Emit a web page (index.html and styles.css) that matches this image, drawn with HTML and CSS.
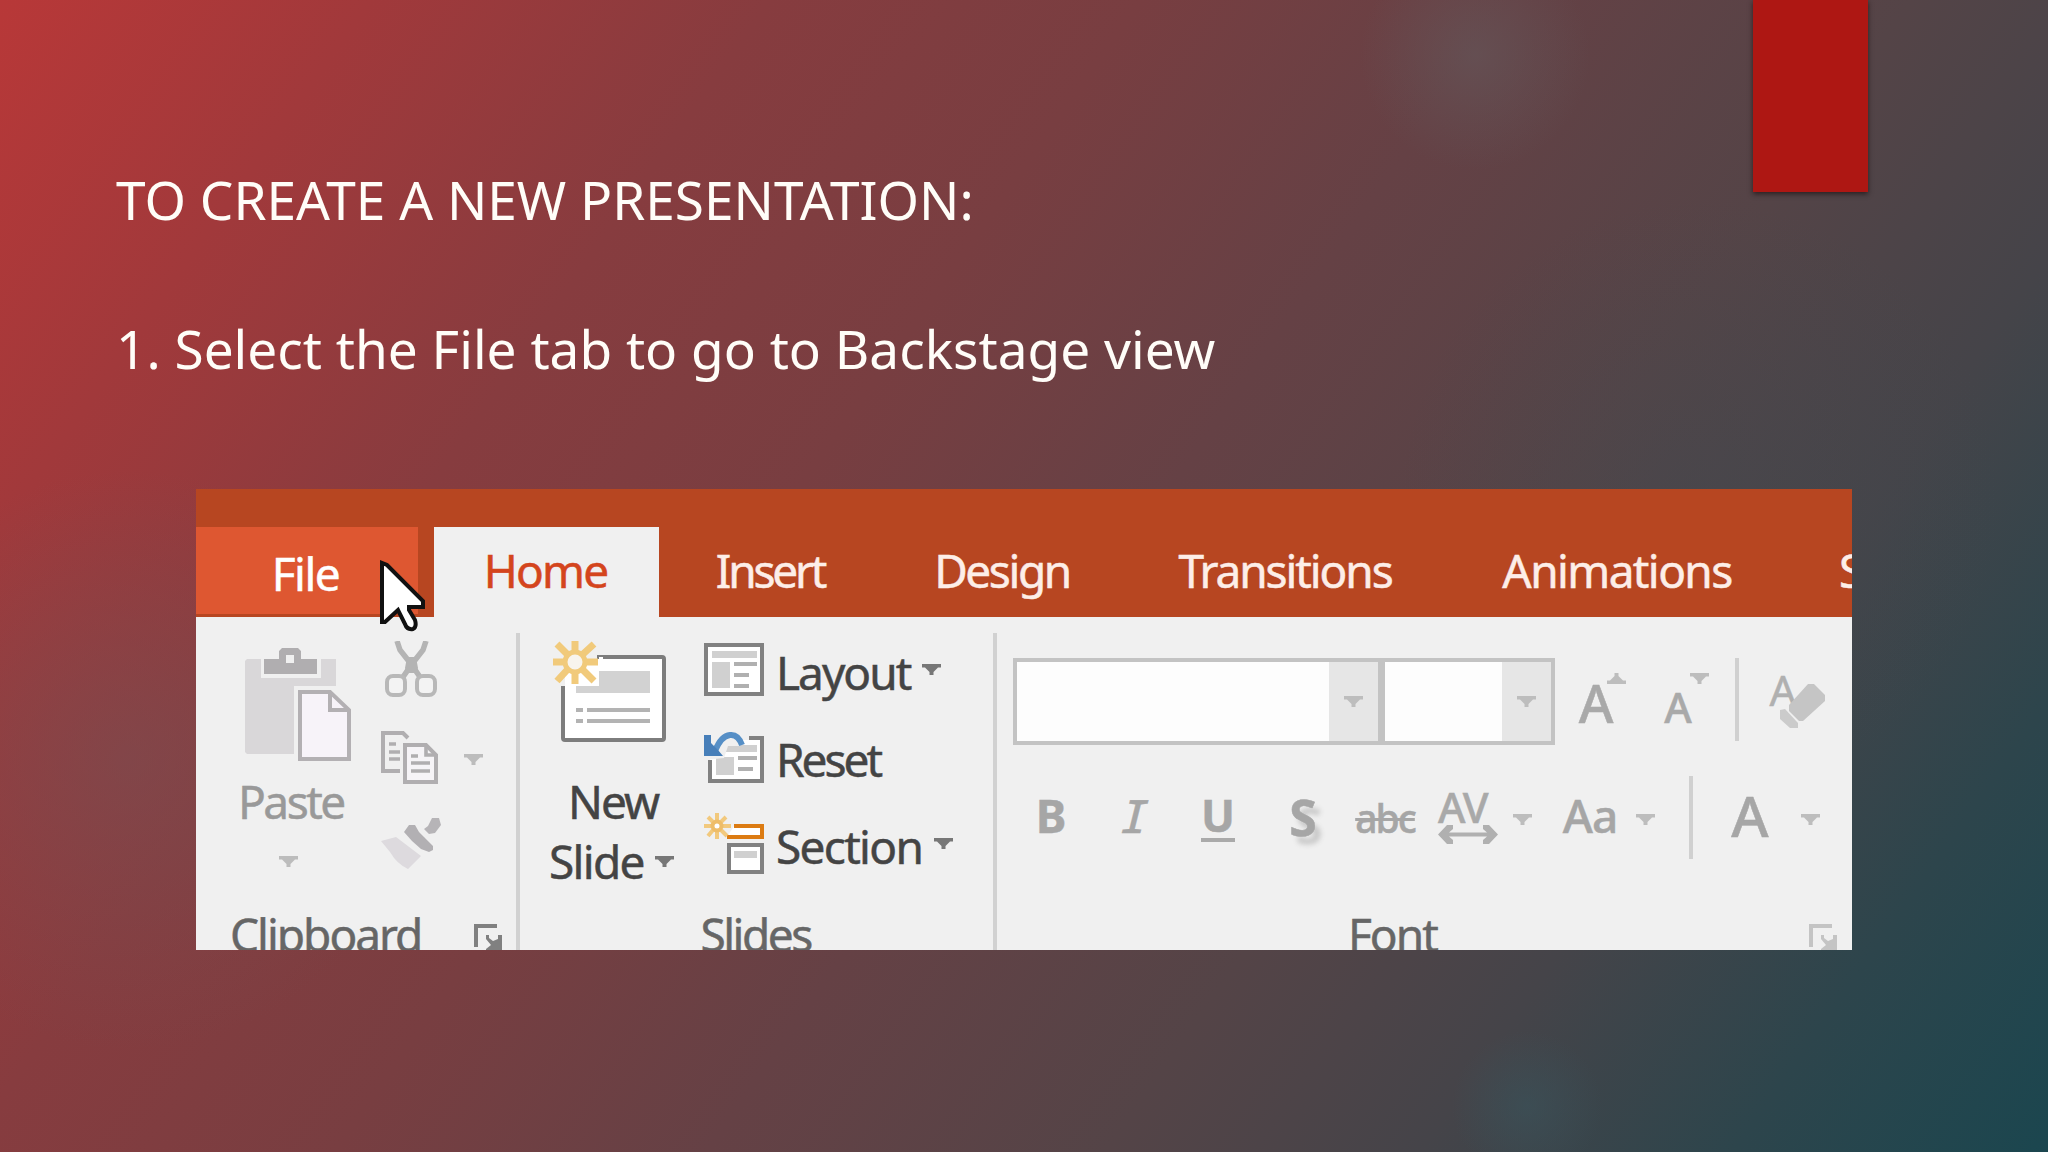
FILE: index.html
```html
<!DOCTYPE html>
<html lang="en">
<head>
<meta charset="utf-8">
<title>To create a new presentation</title>
<link rel="stylesheet" href="styles.css">
</head>
<body>
<svg class="defs" width="0" height="0" aria-hidden="true">
  <symbol id="drop" viewBox="0 0 19 11"><path d="M0 0H19V3.500H16L11.500 8V11H7.500V8L3 3.500H0Z" fill="currentColor"/></symbol>
  <symbol id="launcher" viewBox="0 0 28 28"><path d="M0 0H23V4H4V23H0ZM12 11H15V14L19 17L24 15V11H28V28H12V25L17 21L12 15Z" fill="currentColor"/></symbol>
</svg>
<main class="slide">
  <div class="ribbon-mark"></div>
  <h1 class="title"><span>TO CREATE A NEW PRESENTATION:</span><br><br><span class="step">1. Select the File tab to go to Backstage view</span></h1>

  <section class="office">
    <nav class="tabs">
      <div class="tab file">File</div>
      <div class="tab home">Home</div>
      <div class="tab insert">Insert</div>
      <div class="tab design">Design</div>
      <div class="tab transitions">Transitions</div>
      <div class="tab animations">Animations</div>
      <div class="tab next">S</div>
    </nav>
    <svg class="cursor" viewBox="0 0 46 72"><path d="M2 3V62H5L18 50L25 64Q27 70 33 69Q37 67 35 60L29 50V47H43V41L7 5Z" fill="#fff" stroke="#111" stroke-width="4"/></svg>

    <div class="groups">
      <section class="group clipboard">
        <div class="tools">
          <div class="paste">
            <svg class="paste-icon" viewBox="0 0 106 114">
              <path d="M2 11H16V30H76V11H91V38H49V106H2L0 104V13Z" fill="#d9d7d9"/>
              <path d="M19 11H34V3L37 0H53L56 3V11H72V26H19Z" fill="#b0aeb0"/><path d="M41 7H49V15H41Z" fill="#f0f0f0"/>
              <path d="M55 44H85L104 62V111H55Z" fill="#f7f3f9" stroke="#b3b0b3" stroke-width="4"/>
              <path d="M85 44V62H104" fill="none" stroke="#b3b0b3" stroke-width="4"/>
            </svg>
            <span class="label paste-label">Paste</span>
            <svg class="drop paste-drop"><use href="#drop"/></svg>
          </div>
          <div class="edit">
            <svg class="cut-icon" viewBox="0 0 52 56"><path d="M12 0L15 9L26 23L35 36M41 0L38 9L27 23L18 36" fill="none" stroke="#b4b4b4" stroke-width="5.500"/><path d="M22 16H31L33 27L31 32H22L20 27Z" fill="#b4b4b4"/><rect x="2" y="35" width="18" height="19" rx="6" fill="#f3f3f3" stroke="#b8b8b8" stroke-width="4"/><rect x="32" y="35" width="18" height="19" rx="6" fill="#f3f3f3" stroke="#b8b8b8" stroke-width="4"/></svg>
            <div class="copy">
              <svg class="copy-icon" viewBox="0 0 57 53"><path d="M19 40H2V2H22L27 7" fill="none" stroke="#b0aeb0" stroke-width="4"/><path d="M8 13H15M8 21H19M8 28H19" stroke="#b0aeb0" stroke-width="3.6"/><path d="M24 14H45L55 24V51H24Z" fill="#f6f4f7" stroke="#b0aeb0" stroke-width="4"/><path d="M45 14V24H55M30 25H37M30 32H49M30 40H49" fill="none" stroke="#b0aeb0" stroke-width="3.6"/></svg>
              <svg class="drop"><use href="#drop"/></svg>
            </div>
            <svg class="brush-icon" viewBox="0 0 60 52"><path d="M0 23L15 19L40 38L27 51Q16 46 9 34Z" fill="#dddade"/><path d="M23 14L28 7H34L38 14L43 19L52 28V32L48 34L40 31L31 23Z" fill="#b2b0b3"/><path d="M43 11L47 8L51 0H58L60 7L54 15L48 16Z" fill="#b6b4b7"/></svg>
          </div>
        </div>
        <footer class="caption"><span>Clipboard</span><svg class="launcher"><use href="#launcher"/></svg></footer>
      </section>

      <section class="group slides">
        <div class="tools">
          <div class="new">
            <svg class="new-icon" viewBox="0 0 114 102">
              <rect x="10" y="17" width="101" height="83" rx="2" fill="#fff" stroke="#7d7d7d" stroke-width="4"/>
              <path d="M0 0H44V46H0Z" fill="#f0f0f0"/><path d="M12 44H46V17H50V46H12Z" fill="#fff"/>
              <path d="M12 19H46V53H12Z" fill="#fff"/>
              <path d="M46 31H97V53H23V46H46Z" fill="#d2d2d2"/><path d="M23 70H30M34 70H97M23 81H30M34 81H97" stroke="#b3b3b3" stroke-width="4"/>
              <path d="M22 1V13M22 31V44M0 22H13M31 22H45M4 4L15 15M29 29L41 41M41 4L29 15M15 29L4 41" stroke="#f1ca7b" stroke-width="7"/><circle cx="22" cy="22" r="10" fill="#f8f4ed" stroke="#f1ca7b" stroke-width="5"/>
            </svg>
            <span class="label new-label">New</span>
            <div class="slide-row"><span class="label">Slide</span><svg class="drop"><use href="#drop"/></svg></div>
          </div>
          <div class="commands">
            <div class="command layout"><svg class="icon" viewBox="0 0 60 61"><rect x="2" y="6" width="56" height="49" fill="#fff" stroke="#818181" stroke-width="4"/><path d="M8 12H53V19H8ZM8 23H26V49H8Z" fill="#d0d0d0"/><path d="M30 25H53M30 36H45M30 47H45" stroke="#b0b0b0" stroke-width="4"/></svg><span class="label">Layout</span><svg class="drop"><use href="#drop"/></svg></div>
            <div class="command reset"><svg class="icon" viewBox="0 0 60 61"><path d="M6 12H58V55H6Z" fill="#fff"/><path d="M45 12H58V55H6V34" fill="none" stroke="#818181" stroke-width="4"/><path d="M22 19H53V26H22ZM12 31H30V49H12Z" fill="#d0d0d0"/><path d="M34 32H53M34 43H49" stroke="#b0b0b0" stroke-width="4"/><path d="M0 34V4H45V14H38L36 20H24L20 32Z" fill="#f0f0f0"/><path d="M38 19Q34 8 26 9Q17 10 11 25" fill="none" stroke="#568fc6" stroke-width="6"/><path d="M0 9H7V17L14 24L19 30H0Z" fill="#477fb9"/></svg><span class="label">Reset</span></div>
            <div class="command section"><svg class="icon" viewBox="0 0 60 61"><path d="M30 13H58V24H23" fill="#fff" stroke="#dc7b12" stroke-width="4"/><rect x="25" y="32" width="33" height="27" fill="#fff" stroke="#818181" stroke-width="4"/><path d="M30 38H53V45H30Z" fill="#d0d0d0"/><path d="M13 0V8M13 18V26M0 13H8M18 13H27M4 4L9 9M17 17L23 23M22 4L17 9M9 17L4 23" stroke="#f2c97d" stroke-width="4"/><circle cx="13" cy="13" r="4.5" fill="#fff" stroke="#eebd69" stroke-width="4"/></svg><span class="label">Section</span><svg class="drop"><use href="#drop"/></svg></div>
          </div>
        </div>
        <footer class="caption"><span>Slides</span></footer>
      </section>

      <section class="group font">
        <div class="tools">
          <div class="font-top">
            <div class="combo family"><i></i><b><svg class="drop"><use href="#drop"/></svg></b></div>
            <div class="combo size"><i></i><b><svg class="drop"><use href="#drop"/></svg></b></div>
            <span class="glyph grow">A</span><svg class="drop up"><use href="#drop"/></svg>
            <span class="glyph shrink">A</span><svg class="drop down"><use href="#drop"/></svg>
            <span class="rule"></span>
            <div class="clear"><span>A</span><svg viewBox="0 0 50 50"><path d="M14 24L33 3L39 3L50 14V20L28 40H24L14 30Z" fill="#c5c5c5"/><path d="M5 29L10 28L23 42V47H15L5 38Z" fill="#cbcbcb"/></svg></div>
          </div>
          <div class="font-bottom">
            <span class="glyph bold">B</span>
            <span class="glyph italic">I</span>
            <span class="glyph underline">U</span>
            <span class="glyph shadow">S</span>
            <span class="glyph strike">abc</span>
            <div class="spacing"><span>AV</span><svg viewBox="0 0 60 19"><path d="M0 9.500L9 0H15V4L11 7.500H49L45 4V0H51L60 9.500L51 19H45V15L49 11.500H11L15 15V19H9Z" fill="#b0b0b0"/></svg></div>
            <svg class="drop d1"><use href="#drop"/></svg>
            <span class="glyph case">Aa</span>
            <svg class="drop d2"><use href="#drop"/></svg>
            <span class="rule"></span>
            <span class="glyph color">A</span>
            <svg class="drop d3"><use href="#drop"/></svg>
          </div>
        </div>
        <footer class="caption"><span>Font</span><svg class="launcher"><use href="#launcher"/></svg></footer>
      </section>
    </div>
  </section>
</main>
</body>
</html>
```

FILE: styles.css
```css
* { box-sizing: border-box; }
body { margin: 0; font-family: "Noto Sans", "Open Sans", sans-serif; }
.defs { position: absolute; }
svg { display: block; flex: none; }

.slide {
  position: relative;
  width: 2048px;
  height: 1152px;
  overflow: hidden;
  padding: 163px 196px 0;
  background:
    radial-gradient(circle at 1475px 55px, rgba(100, 92, 95, .5), rgba(100, 92, 95, 0) 115px),
    radial-gradient(circle at 1527px 1106px, rgba(58, 84, 92, .55), rgba(58, 84, 92, 0) 75px),
    radial-gradient(circle at 130px 760px, rgba(118, 80, 84, .5), rgba(118, 80, 84, 0) 290px),
    radial-gradient(circle at 1700px 500px, rgba(66, 74, 80, .4), rgba(66, 74, 80, 0) 300px),
    linear-gradient(125deg, #b83838 0%, #a1393b 13%, #873c3f 27%, #783e41 40%, #654145 53%, #544447 67%, #454449 78%, #2d454c 89%, #1b464f 100%);
}
.ribbon-mark {
  position: absolute;
  top: 0;
  left: 1753px;
  width: 115px;
  height: 192px;
  background: #ae1713;
  box-shadow: 0 2px 5px rgba(20, 10, 10, .65);
}
.title {
  margin: 0 0 0 -80px;
  height: 326px;
  font-size: 53.150px;
  font-weight: 400;
  line-height: 74.700px;
  color: #fffdf8;
  white-space: nowrap;
}

.office {
  position: relative;
  width: 1656px;
  height: 461px;
  overflow: hidden;
  background: #f0f0f0;
  color: #444;
  -webkit-text-stroke: .5px currentColor;
}
.tabs {
  display: flex;
  height: 128px;
  padding-top: 38px;
  background: #b74621;
  overflow: hidden;
}
.tab {
  flex: none;
  height: 90px;
  font-size: 46px;
  line-height: 87px;
  letter-spacing: -1.500px;
  text-align: center;
  color: #fdeee8;
}
.file { width: 222px; height: 87px; margin-right: 16px; padding-right: 3px; line-height: 93px; background: #de5731; color: #fff; }
.home { width: 225px; padding-right: 2px; background: #f0f0f0; color: #d4451d; letter-spacing: -1.800px; }
.insert { width: 222px; letter-spacing: -3.200px; }
.design { width: 242px; letter-spacing: -2.400px; }
.transitions { width: 324px; letter-spacing: -2.100px; }
.animations { width: 340px; letter-spacing: -1.600px; }
.next { width: 100px; padding-left: 52px; text-align: left; }
.cursor { position: absolute; left: 184px; top: 71px; width: 46px; height: 72px; }

.groups { display: flex; height: 333px; }
.group { position: relative; flex: none; height: 333px; }
.group:not(.font)::after {
  content: "";
  position: absolute;
  right: 0;
  top: 16px;
  bottom: 0;
  width: 4px;
  background: #d1d1d1;
}
.clipboard { width: 324px; }
.slides { width: 477px; }
.font { width: 855px; }
.tools { display: flex; height: 291px; }
.label { font-size: 46px; line-height: 60px; letter-spacing: -1.500px; white-space: nowrap; }
.drop { width: 19px; height: 11px; color: #777; }
.caption {
  display: flex;
  justify-content: center;
  height: 42px;
  overflow: hidden;
  font-size: 46px;
  line-height: 52px;
  letter-spacing: -2px;
  color: #666;
}
.launcher { width: 28px; height: 28px; margin-top: 16px; }
.clipboard .launcher { color: #808080; }

.clipboard .drop { color: #bcbcbc; }
.paste { width: 185px; padding: 31px 0 0 49px; }
.paste-icon { width: 106px; height: 114px; }
.paste-label { display: block; margin: 9px 0 0 -7px; color: #999; letter-spacing: -2.500px; }
.paste-drop { margin: 25px 0 0 34px; }
.edit { padding-top: 24px; }
.cut-icon { width: 52px; height: 56px; margin-left: 4px; }
.copy { display: flex; gap: 26px; align-items: center; margin-top: 34px; }
.copy .drop { margin-top: 3px; }
.copy-icon { width: 57px; height: 53px; }
.brush-icon { width: 60px; height: 52px; margin-top: 34px; }
.clipboard .caption { justify-content: flex-start; padding-left: 34px; }
.clipboard .caption span { width: 244px; }

.new { width: 184px; padding: 23px 0 0 33px; }
.new-icon { width: 114px; height: 102px; }
.new-label { display: block; margin: 29px 0 0 15px; letter-spacing: -2px; }
.slide-row { display: flex; align-items: center; gap: 11px; margin-left: -4px; }
.slide-row .label { letter-spacing: -1.700px; }
.commands { padding-top: 22px; }
.command { display: flex; align-items: center; height: 61px; margin-bottom: 26px; }
.command .label { padding-top: 4px; }
.icon { width: 60px; height: 61px; margin-right: 12px; }
.command .drop { margin-left: 12px; }
.layout .label { letter-spacing: -2px; }
.reset .label { letter-spacing: -3px; }
.section .label { letter-spacing: -1.700px; }
.slides .caption span { width: 116px; letter-spacing: -2.500px; }

.font .tools { flex-direction: column; }
.font .drop { color: #bdbdbd; }
.font-top { display: flex; height: 146px; padding: 41px 0 0 16px; }
.combo { display: flex; flex: none; height: 87px; border: 4px solid #c3c3c3; }
.combo i { background: #fdfdfd; }
.combo b { display: flex; align-items: center; justify-content: center; width: 49px; background: #e6e6e6; }
.family { width: 369px; }
.family i { width: 312px; }
.size { width: 173px; border-left-width: 3px; }
.size i { width: 117px; }
.glyph { flex: none; font-weight: 500; color: #a9a9a9; text-align: center; }
.grow { width: 38px; margin-left: 22px; font-size: 53px; line-height: 89px; }
.up { margin: 15px 0 0 -8px; transform: scaleY(-1); }
.shrink { width: 32px; margin-left: 36px; font-size: 42px; line-height: 98px; }
.down { margin: 15px 0 0 -4px; }
.rule { width: 4px; height: 83px; background: #d0d0d0; }
.font-top .rule { margin-left: 26px; }
.clear { position: relative; width: 55px; height: 62px; margin: 11px 0 0 30px; color: #b0b0b0; }
.clear span { display: block; width: 26px; font-size: 42px; line-height: 42px; text-align: center; letter-spacing: -2px; }
.clear svg { position: absolute; left: 6px; top: 12px; width: 50px; height: 50px; }
.font-bottom { display: flex; height: 100px; padding-top: 12.500px; }
.font-bottom .glyph { font-size: 46px; line-height: 78px; color: #a6a6a6; }
.font-bottom .bold { width: 40px; margin-left: 34px; font-weight: 700; font-size: 46px; }
.font-bottom .italic { width: 40px; margin-left: 40px; font-family: "Noto Sans Mono", "DejaVu Sans Mono", monospace; font-style: italic; font-weight: 500; }
.font-bottom .underline { width: 34px; height: 66px; margin-left: 50px; font-weight: 700; font-size: 45px; border-bottom: 4px solid #aaa; }
.font-bottom .shadow { width: 30px; margin-left: 53px; font-weight: 700; font-size: 50px; line-height: 82px; text-shadow: 6px 8px 5px #c9c9c9; }
.font-bottom .strike { width: 66px; margin-left: 34px; font-size: 39px; line-height: 84px; letter-spacing: -2px; text-decoration: line-through; text-decoration-thickness: 3px; }
.spacing { width: 60px; margin-left: 20px; color: #a9a9a9; font-size: 42px; font-weight: 500; }
.spacing span { display: block; height: 49px; line-height: 62px; letter-spacing: -1px; }
.spacing svg { width: 60px; height: 19px; }
.d1, .d2, .d3 { margin-top: 38px; }
.d1 { margin-left: 15px; }
.font-bottom .case { width: 60px; margin-left: 28px; letter-spacing: -1px; }
.d2 { margin-left: 16px; }
.font-bottom .rule { margin-left: 34px; }
.font-bottom .color { width: 42px; margin-left: 36px; font-size: 57px; line-height: 78px; }
.d3 { margin-left: 30px; }
.font .caption { justify-content: flex-start; padding-left: 351px; }
.font .caption span { width: 461px; }
.font .launcher { color: #c4c4c4; }
```
